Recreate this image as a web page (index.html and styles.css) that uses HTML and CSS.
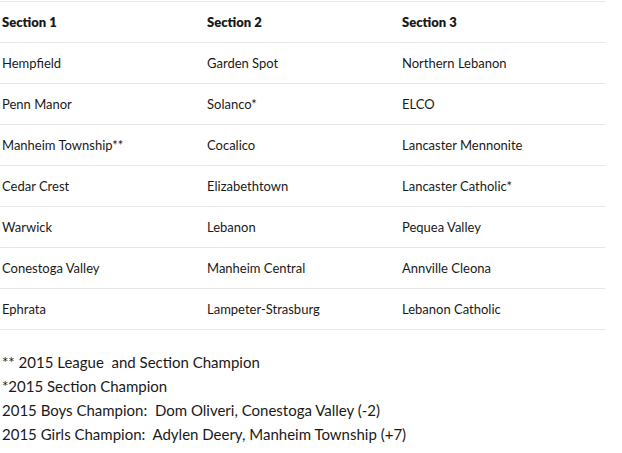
FILE: index.html
```html
<!DOCTYPE html>
<html>
<head>
<meta charset="utf-8">
<link rel="stylesheet" href="styles.css">
</head>
<body>
<div class="page">
  <table class="sections">
    <thead>
      <tr><th>Section 1</th><th>Section 2</th><th>Section 3</th></tr>
    </thead>
    <tbody>
      <tr><td>Hempfield</td><td>Garden Spot</td><td>Northern Lebanon</td></tr>
      <tr><td>Penn Manor</td><td>Solanco*</td><td>ELCO</td></tr>
      <tr><td>Manheim Township**</td><td>Cocalico</td><td>Lancaster Mennonite</td></tr>
      <tr><td>Cedar Crest</td><td>Elizabethtown</td><td>Lancaster Catholic*</td></tr>
      <tr><td>Warwick</td><td>Lebanon</td><td>Pequea Valley</td></tr>
      <tr><td>Conestoga Valley</td><td>Manheim Central</td><td>Annville Cleona</td></tr>
      <tr><td>Ephrata</td><td>Lampeter-Strasburg</td><td>Lebanon Catholic</td></tr>
    </tbody>
  </table>
  <div class="notes">
    <p>** 2015 League&nbsp; and Section Champion</p>
    <p>*2015 Section Champion</p>
    <p>2015 Boys Champion:&nbsp; Dom Oliveri, Conestoga Valley (-2)</p>
    <p>2015 Girls Champion:&nbsp; Adylen Deery, Manheim Township (+7)</p>
    <p class="more">See: <a class="link" href="#">Lancaster-Lebanon golf</a> results and all-league</p>
  </div>
</div>
</body>
</html>
```
FILE: styles.css
```css
html, body {
  margin: 0;
  padding: 0;
  background: #fff;
}
body {
  font-family: "Lato", "Liberation Sans", sans-serif;
  color: #1a1a1a;
}
.page {
  padding-top: 1px;
}
.sections {
  width: 605px;
  border-collapse: collapse;
  font-size: 13px;
}
.sections th,
.sections td {
  border-top: 1px solid #e6e6e6;
  height: 40px;
  padding: 0 0 0 2px;
  text-align: left;
  vertical-align: middle;
}
.sections tbody tr:last-child td {
  border-bottom: 1px solid #e6e6e6;
}
.sections th {
  font-weight: 800;
}
.sections th:nth-child(1) { width: 203px; }
.sections th:nth-child(2) { width: 193px; }
.notes {
  margin-top: 20px;
  padding-left: 2px;
  font-size: 15px;
  line-height: 24px;
}
.notes p {
  margin: 0;
}
.link {
  color: #c8102e;
  text-decoration: none;
}
```
